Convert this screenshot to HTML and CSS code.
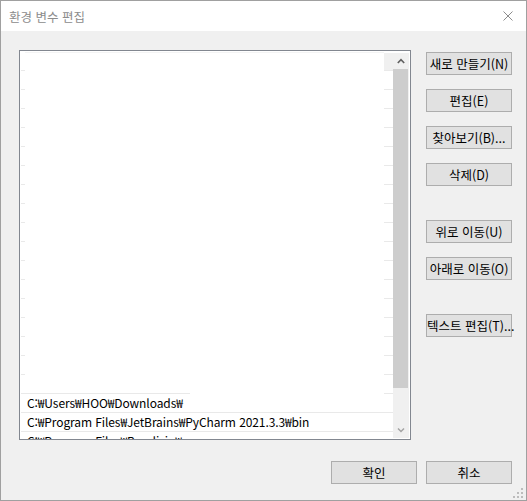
FILE: index.html
```html
<!DOCTYPE html>
<html lang="ko">
<head>
    <meta charset="UTF-8">
    <title>환경 변수 편집</title>
    <link rel="stylesheet" href="styles.css">
</head>
<body>
    <div class="window">
        <div class="titlebar">
            <span class="title">환경 변수 편집</span>
            <svg class="close" width="10" height="10" viewBox="0 0 10 10">
                <path d="M0.5 0.5 L9.5 9.5 M9.5 0.5 L0.5 9.5" stroke="#8c8c8c" stroke-width="1" fill="none"/>
            </svg>
        </div>

        <div class="content">
            <div class="main">
                <!-- Path list -->
                <div class="list">
                    <div class="rows">
                        <div class="row first"></div>
                        <div class="row"></div>
                        <div class="row"></div>
                        <div class="row"></div>
                        <div class="row"></div>
                        <div class="row"></div>
                        <div class="row"></div>
                        <div class="row"></div>
                        <div class="row"></div>
                        <div class="row"></div>
                        <div class="row"></div>
                        <div class="row"></div>
                        <div class="row"></div>
                        <div class="row"></div>
                        <div class="row"></div>
                        <div class="row"></div>
                        <div class="row"></div>
                        <div class="row long"></div>
                        <div class="row full">C:₩Users₩HOO₩Downloads₩</div>
                        <div class="row full">C:₩Program Files₩JetBrains₩PyCharm 2021.3.3₩bin</div>
                        <div class="row">C:₩Program Files₩Bandizip₩</div>
                    </div>
                    <div class="scrollbar">
                        <div class="sb-btn">
                            <svg width="8" height="6" viewBox="0 0 8 6">
                                <path d="M0.8 5 L4 1.6 L7.2 5" stroke="#606060" stroke-width="1.6" fill="none"/>
                            </svg>
                        </div>
                        <div class="thumb"></div>
                        <div class="track"></div>
                        <div class="sb-btn">
                            <svg width="8" height="6" viewBox="0 0 8 6">
                                <path d="M1 1.5 L4 4.5 L7 1.5" stroke="#a3a3a3" stroke-width="1.5" fill="none"/>
                            </svg>
                        </div>
                    </div>
                </div>

                <!-- Action buttons -->
                <div class="side">
                    <button>새로 만들기(N)</button>
                    <button>편집(E)</button>
                    <button>찾아보기(B)...</button>
                    <button>삭제(D)</button>
                    <button class="group">위로 이동(U)</button>
                    <button>아래로 이동(O)</button>
                    <button class="group">텍스트 편집(T)...</button>
                </div>
            </div>

            <div class="footer">
                <button>확인</button>
                <button>취소</button>
            </div>
        </div>

        <svg class="grip" width="10" height="10" viewBox="0 0 10 10">
            <rect x="8" y="0" width="2" height="2" fill="#bcbcbc"/>
            <rect x="4" y="4" width="2" height="2" fill="#bcbcbc"/>
            <rect x="8" y="4" width="2" height="2" fill="#bcbcbc"/>
            <rect x="0" y="8" width="2" height="2" fill="#bcbcbc"/>
            <rect x="4" y="8" width="2" height="2" fill="#bcbcbc"/>
            <rect x="8" y="8" width="2" height="2" fill="#bcbcbc"/>
        </svg>
    </div>
</body>
</html>
```

FILE: styles.css
```css
* {
    margin: 0;
    padding: 0;
    box-sizing: border-box;
}

body {
    background: #f0f0f0;
    font-family: "Noto Sans CJK KR", "Noto Sans", sans-serif;
    font-size: 12px;
    color: #000;
}

.window {
    position: relative;
    width: 527px;
    height: 501px;
    border: 1px solid #a0a0a0;
    background: #f0f0f0;
}

.titlebar {
    height: 30px;
    background: #fff;
    display: flex;
    align-items: center;
    justify-content: space-between;
    padding: 0 13px 0 8px;
}

.title {
    color: #8c8c8c;
    font-size: 12.5px;
}

.content {
    padding: 19px 14px 0 18px;
}

.main {
    display: flex;
}

/* list box */
.list {
    width: 392px;
    height: 390px;
    border: 1px solid #828790;
    background: #fff;
    display: flex;
}

.rows {
    flex: 1;
    padding-top: 1px;
    overflow: hidden;
}

.row {
    height: 19px;
    line-height: 18px;
    padding-left: 7px;
    white-space: nowrap;
    letter-spacing: -0.1px;
    background:
        linear-gradient(#e9e9e9, #e9e9e9) left 1px bottom 0 / 4px 1px no-repeat,
        linear-gradient(#e9e9e9, #e9e9e9) right 0 bottom 0 / 9px 1px no-repeat;
}

.row.first {
    background:
        linear-gradient(#f4f4f4, #f4f4f4) left 5px top 0 / 359px 1px no-repeat,
        linear-gradient(#f0f0f0, #f0f0f0) right 0 top 1px / 9px 17px no-repeat,
        linear-gradient(#e9e9e9, #e9e9e9) left 1px bottom 0 / 4px 1px no-repeat,
        linear-gradient(#e9e9e9, #e9e9e9) right 0 bottom 0 / 9px 1px no-repeat;
}

.row.long {
    background:
        linear-gradient(#e9e9e9, #e9e9e9) left 1px bottom 0 / 169px 1px no-repeat,
        linear-gradient(#e9e9e9, #e9e9e9) right 0 bottom 0 / 9px 1px no-repeat;
}

.row.full {
    background: linear-gradient(#e9e9e9, #e9e9e9) left 1px bottom 0 / 372px 1px no-repeat;
}

/* scrollbar */
.scrollbar {
    width: 16px;
    margin: 2px 1px 1px 0;
    background: #f0f0f0;
    display: flex;
    flex-direction: column;
}

.sb-btn {
    height: 16px;
    display: flex;
    align-items: center;
    justify-content: center;
}

.thumb {
    height: 319px;
    margin: 0 1px 0 0;
    background: #cdcdcd;
}

.track {
    flex: 1;
}

/* buttons */
button {
    height: 23px;
    width: 86px;
    font-family: inherit;
    font-size: 12.5px;
    color: #000;
    background: #e1e1e1;
    border: 1px solid #adadad;
    white-space: nowrap;
    padding: 0;
}

.side {
    display: flex;
    flex-direction: column;
    gap: 14px;
    margin-left: 15px;
    padding-top: 2px;
}

.side .group {
    margin-top: 20px;
}

.footer {
    display: flex;
    justify-content: flex-end;
    gap: 9px;
    margin-top: 21px;
}

.grip {
    position: absolute;
    right: 3px;
    bottom: 2px;
}
```
